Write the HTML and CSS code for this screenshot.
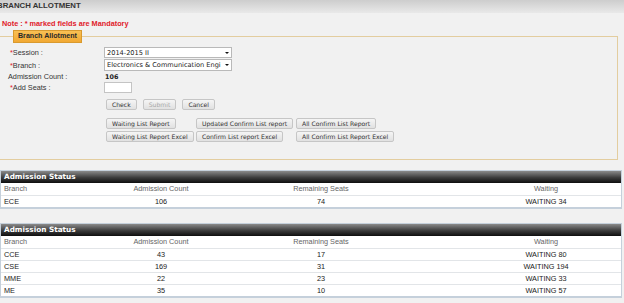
FILE: index.html
```html
<!DOCTYPE html>
<html lang="en">
<head>
  <meta charset="UTF-8" />
  <meta name="viewport" content="width=device-width, initial-scale=1.0"/>
  <title>Branch Allotment</title>
  <link rel="stylesheet" href="styles.css">
</head>
<body>
  <div class="page-title">BRANCH ALLOTMENT</div>

  <p class="note">Note : * marked fields are Mandatory</p>

  <fieldset class="box">
    <legend>Branch Allotment</legend>

    <div class="form-grid">
      <label class="req"><span class="star">*</span>Session :</label>
      <div class="select"><span>2014-2015 II</span></div>

      <label class="req"><span class="star">*</span>Branch :</label>
      <div class="select"><span>Electronics &amp; Communication Engi</span></div>

      <label>Admission Count :</label>
      <div class="count">106</div>

      <label class="req"><span class="star">*</span>Add Seats :</label>
      <div><input type="text" class="seats"></div>
    </div>

    <div class="actions">
      <div class="btn-row">
        <button class="btn">Check</button>
        <button class="btn" disabled>Submit</button>
        <button class="btn">Cancel</button>
      </div>
      <div><button class="btn">Waiting List Report</button></div>
      <div><button class="btn">Updated Confirm List report</button></div>
      <div><button class="btn">All Confirm List Report</button></div>
      <div><button class="btn">Waiting List Report Excel</button></div>
      <div><button class="btn">Confirm List report Excel</button></div>
      <div><button class="btn">All Confirm List Report Excel</button></div>
    </div>
  </fieldset>

  <div class="status">
    <div class="status-head">Admission Status</div>
    <div class="row row-head">
      <div class="cell-left">Branch</div>
      <div>Admission Count</div>
      <div>Remaining Seats</div>
      <div class="cell-wait">Waiting</div>
    </div>
    <div class="row">
      <div class="cell-left">ECE</div>
      <div>106</div>
      <div>74</div>
      <div class="cell-wait">WAITING 34</div>
    </div>
  </div>

  <div class="status status-second">
    <div class="status-head">Admission Status</div>
    <div class="row row-head">
      <div class="cell-left">Branch</div>
      <div>Admission Count</div>
      <div>Remaining Seats</div>
      <div class="cell-wait">Waiting</div>
    </div>
    <div class="row">
      <div class="cell-left">CCE</div>
      <div>43</div>
      <div>17</div>
      <div class="cell-wait">WAITING 80</div>
    </div>
    <div class="row">
      <div class="cell-left">CSE</div>
      <div>169</div>
      <div>31</div>
      <div class="cell-wait">WAITING 194</div>
    </div>
    <div class="row">
      <div class="cell-left">MME</div>
      <div>22</div>
      <div>23</div>
      <div class="cell-wait">WAITING 33</div>
    </div>
    <div class="row">
      <div class="cell-left">ME</div>
      <div>35</div>
      <div>10</div>
      <div class="cell-wait">WAITING 57</div>
    </div>
  </div>
</body>
</html>
```

FILE: styles.css
```css
body {
  margin: 0;
  background-color: #f1f1f1;
  font-family: "Liberation Sans", Arial, sans-serif;
  color: #333;
  overflow: hidden;
}

.page-title {
  height: 13px;
  line-height: 12px;
  font-size: 7.8px;
  font-weight: bold;
  color: #333;
  text-indent: -3px;
  background: linear-gradient(#cdcdcd, #e9e9e9);
}

.note {
  margin: 6px 0 0 2px;
  line-height: 10px;
  font-size: 7.3px;
  font-weight: bold;
  color: #e0202a;
}

.box {
  margin: 1px 6px 0 0;
  padding: 4px 0 23px 8px;
  border: 1px solid #e3cd9f;
  border-left: none;
  min-width: 0;
}

.box legend {
  margin-left: 5px;
  padding: 0 4px;
  height: 11px;
  line-height: 11px;
  font-size: 7.1px;
  font-weight: bold;
  color: #2a2a2a;
  background: linear-gradient(#f9c054, #f1a832);
  border: 1px solid #d99a2e;
}

.form-grid {
  display: grid;
  grid-template-columns: 96px 128px;
  grid-template-rows: 11px 12px 9px 11px;
  row-gap: 1px;
  align-items: center;
  font-size: 7.3px;
}

.form-grid .req {
  padding-left: 2px;
}

.star {
  color: #e0202a;
}

.select {
  position: relative;
  height: 100%;
  box-sizing: border-box;
  background: #fff;
  border: 1px solid #b9b9b9;
  font-family: "DejaVu Sans", Verdana, sans-serif;
  font-size: 6.6px;
  color: #222;
  padding-left: 2px;
  display: flex;
  align-items: center;
  overflow: hidden;
  white-space: nowrap;
}

.select::after {
  content: "";
  position: absolute;
  right: 2px;
  top: 50%;
  margin-top: -1px;
  border-left: 2px solid transparent;
  border-right: 2px solid transparent;
  border-top: 2px solid #111;
  background: #fff;
  box-shadow: 0 0 0 2px #fff;
}

.count {
  font-family: "DejaVu Sans", Verdana, sans-serif;
  font-size: 6.4px;
  font-weight: bold;
  color: #222;
  padding-left: 1px;
}

.seats {
  display: block;
  width: 28px;
  height: 11px;
  box-sizing: border-box;
  margin: 0;
  padding: 0;
  background: #fff;
  border: 1px solid #c4c4c4;
}

.actions {
  display: grid;
  grid-template-columns: 90px 100px auto;
  grid-auto-rows: 11px;
  row-gap: 2px;
  margin: 6px 0 0 98px;
}

.btn-row {
  grid-column: 1 / 4;
  display: flex;
  gap: 6px;
  margin-bottom: 1px;
}

.btn {
  height: 11px;
  margin: 0;
  padding: 0 5px;
  line-height: 9px;
  font-family: "DejaVu Sans", Verdana, sans-serif;
  font-size: 6.1px;
  color: #333;
  background: linear-gradient(#f5f5f5, #e1e1e1);
  border: 1px solid #c6c6c6;
  border-radius: 2px;
  white-space: nowrap;
}

.btn:disabled {
  color: #a8a8a8;
}

.status {
  margin: 10px 2px 0 0;
  background: #fff;
  border: 1px solid #c5d0db;
  border-bottom-width: 2px;
}

.status-second {
  margin-top: 14px;
}

.status-head {
  height: 12px;
  line-height: 12px;
  padding-left: 3px;
  font-family: "DejaVu Sans", Verdana, sans-serif;
  font-size: 7.3px;
  font-weight: bold;
  color: #fff;
  background: linear-gradient(#8a8a8a, #3c3c3c 55%, #0e0e0e);
}

.row {
  display: grid;
  grid-template-columns: 80px 160px 160px 1fr;
  height: 11px;
  line-height: 11px;
  border-top: 1px solid #e2e5e8;
  font-size: 7.3px;
  color: #222;
  text-align: center;
  white-space: nowrap;
}

.row-head {
  border-top: none;
  height: 12px;
  line-height: 12px;
  color: #666;
}

.cell-left {
  text-align: left;
  padding-left: 3px;
}

.cell-wait {
  padding-left: 70px;
}
```
